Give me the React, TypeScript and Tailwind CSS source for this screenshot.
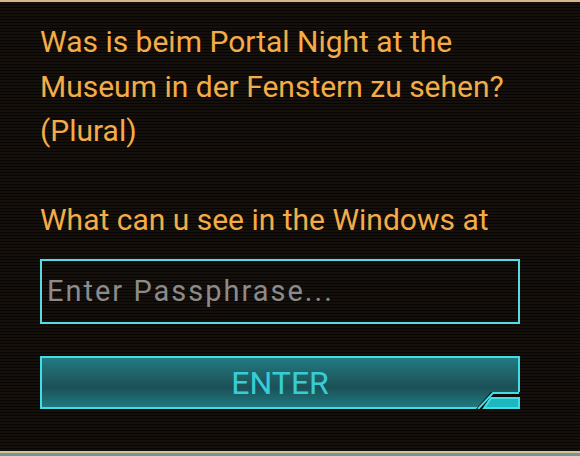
import React from "react";

export default function App() {
  return (
    <div className="w-[580px] h-[456px] overflow-hidden relative bg-[#0e0a07] [background-image:repeating-linear-gradient(to_bottom,#15100c_0px,#15100c_2px,#080604_2px,#080604_3px)] border-t-2 border-[#d9b58a] font-['Roboto',sans-serif]">
      <div className="pl-10 pt-[18px] w-[520px]">
        <div className="text-[#f4ac48] text-[30px] leading-[44.5px] h-[222px] overflow-hidden whitespace-nowrap">
          <p>Was is beim Portal Night at the</p>
          <p>Museum in der Fenstern zu sehen?</p>
          <p>(Plural)</p>
          <p>&nbsp;</p>
          <p>What can u see in the Windows at</p>
        </div>
        <div className="mt-[17px] h-[65px] border-2 border-[#56dae4] flex items-center px-[5px]">
          <span className="text-[#8b8b8b] text-[29px] tracking-[2px]">Enter Passphrase...</span>
        </div>
        <div className="mt-[32px] relative h-[53px] border-2 border-[#44dde6] bg-[linear-gradient(to_bottom,#1f7c82_0%,#1f5a60_45%,#1b5057_60%,#1d7a80_100%)] flex items-center justify-center">
          <span className="text-[#37ccd6] text-[32px]">ENTER</span>
          <svg className="absolute right-[-2px] bottom-[-2px]" width="48" height="20" viewBox="0 0 48 20">
            <path d="M4 20 L19 3 L48 3 L48 20 Z" fill="#0d0a07" />
            <path d="M6 20 L21 4 L47 4" stroke="#44dde6" strokeWidth="2" fill="none" />
            <path d="M12 19 L19 9 L47 9 L47 19 Z" fill="#1db7c0" stroke="#44dde6" strokeWidth="2" strokeLinejoin="miter" />
          </svg>
        </div>
      </div>
      <div className="absolute left-0 right-0 bottom-0 h-[5px] flex flex-col">
        <div className="h-[2px] bg-[#d5c39a]" />
        <div className="h-[3px] bg-[#6f9a86]" />
      </div>
    </div>
  );
}
